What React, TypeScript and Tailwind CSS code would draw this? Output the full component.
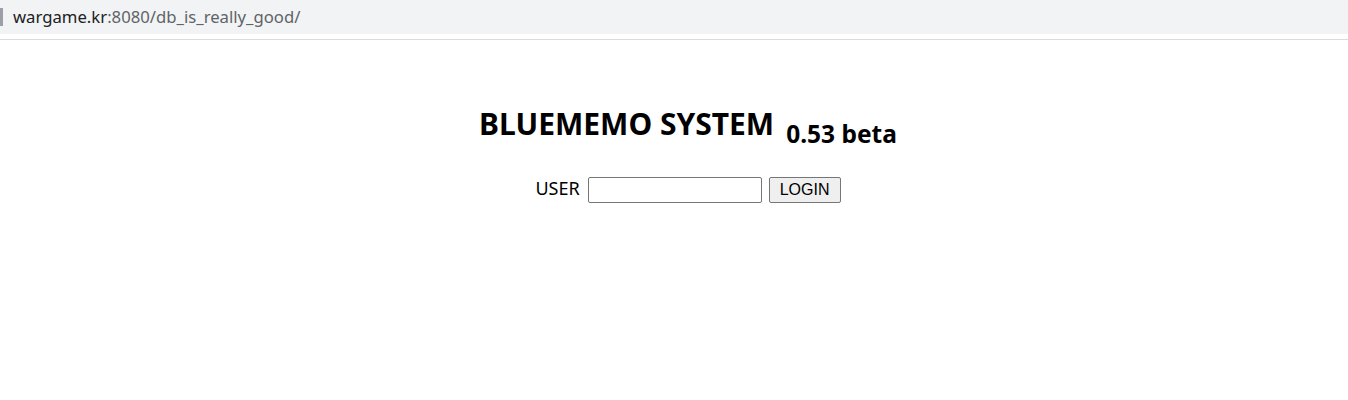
export default function App() {
  return (
    <div className="w-[1348px] h-[400px] bg-white overflow-hidden" style={{ fontFamily: '"Noto Sans", "Noto Sans CJK KR", sans-serif' }}>
      <div className="h-[34px] bg-[#f1f3f4] flex items-center relative">
        <div className="absolute left-0 top-[8px] w-[3px] h-[18px] bg-[#9aa0a6]" />
        <div className="pl-[13px] text-[16.7px] leading-none pt-[1px]">
          <span className="text-[#202124]">wargame.kr</span>
          <span className="text-[#5f6368]">:8080/db_is_really_good/</span>
        </div>
      </div>
      <div className="h-[5px]" />
      <div className="h-px bg-[#dadce0]" />
      <div className="flex flex-col items-center pl-[28px] text-black">
        <h1 className="mt-[64px] text-[30px] font-bold leading-[40px] flex items-baseline">
          <span>BLUEMEMO SYSTEM</span>
          <span className="ml-[12px] text-[24.5px] relative top-[8px]">0.53 beta</span>
        </h1>
        <div className="mt-[30px] flex items-center text-[18px]">
          <span className="relative -top-[1px]">USER</span>
          <input className="ml-[8px] w-[174px] h-[26px] border border-[#767676] rounded-[2px] bg-white" />
          <button className="ml-[7px] w-[72px] h-[26px] mt-[1px] border border-[#767676] rounded-[2px] bg-[#efefef] text-[16px]" style={{ fontFamily: '"Liberation Sans", Arial, sans-serif' }}>LOGIN</button>
        </div>
      </div>
    </div>
  );
}
